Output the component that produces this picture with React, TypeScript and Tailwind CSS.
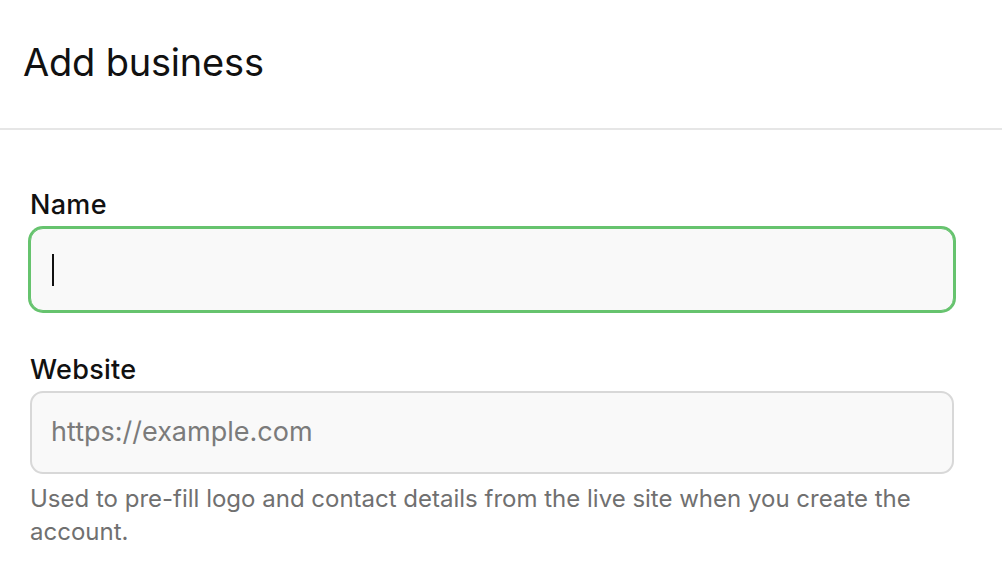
export default function App() {
  return (
    <div className="w-[1002px] h-[586px] bg-white font-['Inter',sans-serif] overflow-hidden">
      <div className="h-[130px] border-b-2 border-[#e6e6e6] flex items-center pl-[23px] pb-[4px]">
        <h1 className="text-[38px] leading-none text-[#111] tracking-[-0.2px]">Add business</h1>
      </div>
      <div className="pl-[30px] pr-[48px] pt-[60px]">
        <label className="block text-[27px] leading-[30px] font-medium text-[#111] tracking-[0.3px] mb-[8px]">Name</label>
        <div className="h-[83px] rounded-[13px] border border-[#66c36e] ring-2 ring-[#66c36e] bg-[#f9f9f9] flex items-center pl-[21px]">
          <div className="w-[2px] h-[32px] bg-[#111]" />
        </div>
        <label className="block mt-[44px] text-[27px] leading-[30px] font-medium text-[#111] tracking-[0.3px] mb-[6px]">Website</label>
        <div className="h-[83px] rounded-[13px] border-2 border-[#d8d8d8] bg-[#f9f9f9] flex items-center pl-[19px]">
          <span className="text-[27px] text-[#7b7b7b]">https://example.com</span>
        </div>
        <p className="mt-[8px] text-[24px] leading-[33px] text-[#707070]">
          Used to pre-fill logo and contact details from the live site when you create the account.
        </p>
      </div>
    </div>
  );
}
